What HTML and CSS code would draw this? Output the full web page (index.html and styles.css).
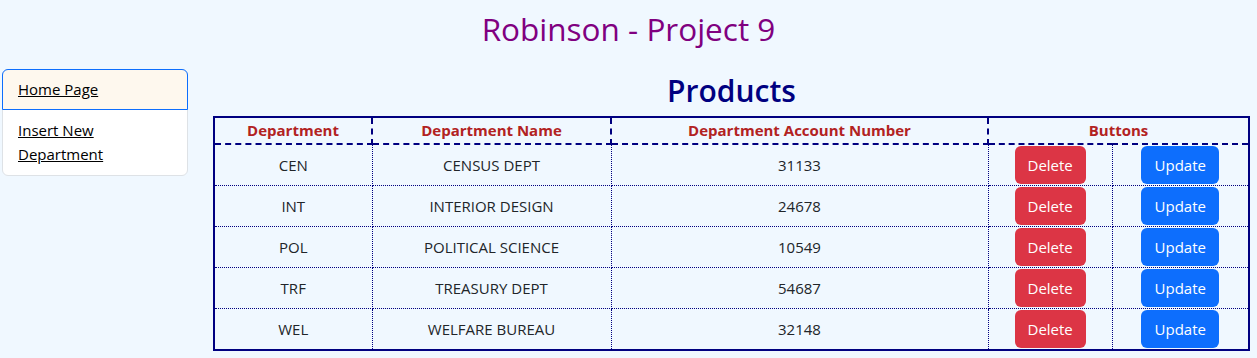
FILE: index.html
```html
<!DOCTYPE html>
<html lang="en">
<head>
    <meta charset="UTF-8">
    <meta name="viewport" content="width=device-width, initial-scale=1.0">
    <title>Robinson - Project 9</title>
    <link rel="stylesheet" href="styles.css">
</head>
<body>
    <h1 class="title">Robinson - Project 9</h1>
    <div class="layout">
        <div class="sidebar">
            <a href="#" class="nav-item active">Home Page</a>
            <a href="#" class="nav-item">Insert New Department</a>
        </div>
        <div class="main">
            <h2 class="heading">Products</h2>
            <table class="products">
                <colgroup>
                    <col class="col-code">
                    <col class="col-name">
                    <col class="col-acct">
                    <col class="col-del">
                    <col class="col-upd">
                </colgroup>
                <thead>
                    <tr>
                        <th>Department</th>
                        <th>Department Name</th>
                        <th>Department Account Number</th>
                        <th colspan="2">Buttons</th>
                    </tr>
                </thead>
                <tbody>
                    <tr>
                        <td>CEN</td>
                        <td>CENSUS DEPT</td>
                        <td>31133</td>
                        <td><button class="btn btn-delete">Delete</button></td>
                        <td><button class="btn btn-update">Update</button></td>
                    </tr>
                    <tr>
                        <td>INT</td>
                        <td>INTERIOR DESIGN</td>
                        <td>24678</td>
                        <td><button class="btn btn-delete">Delete</button></td>
                        <td><button class="btn btn-update">Update</button></td>
                    </tr>
                    <tr>
                        <td>POL</td>
                        <td>POLITICAL SCIENCE</td>
                        <td>10549</td>
                        <td><button class="btn btn-delete">Delete</button></td>
                        <td><button class="btn btn-update">Update</button></td>
                    </tr>
                    <tr>
                        <td>TRF</td>
                        <td>TREASURY DEPT</td>
                        <td>54687</td>
                        <td><button class="btn btn-delete">Delete</button></td>
                        <td><button class="btn btn-update">Update</button></td>
                    </tr>
                    <tr>
                        <td>WEL</td>
                        <td>WELFARE BUREAU</td>
                        <td>32148</td>
                        <td><button class="btn btn-delete">Delete</button></td>
                        <td><button class="btn btn-update">Update</button></td>
                    </tr>
                </tbody>
            </table>
        </div>
    </div>
</body>
</html>
```

FILE: styles.css
```css
body {
    font-family: "Open Sans", "Noto Sans", sans-serif;
    font-size: 15px;
    line-height: 1.5;
    color: #212529;
    background-color: #f0f8ff;
    margin: 0;
}
.title {
    text-align: center;
    color: #800080;
    font-size: 31.5px;
    font-weight: 500;
    line-height: 1.2;
    margin: 10px 0 16px;
}
.layout {
    display: flex;
    align-items: flex-start;
}
.sidebar {
    box-sizing: border-box;
    width: 186px;
    margin-left: 2px;
    margin-top: 5px;
    display: flex;
    flex-direction: column;
    background-color: #fff;
    border: 1px solid #dee2e6;
    border-radius: 6px;
}
.nav-item {
    display: block;
    padding: 7px 15px 8px;
    color: #000;
    font-size: 15px;
    line-height: 24px;
    border: 1px solid transparent;
    margin: -1px;
}
.nav-item + .nav-item {
    margin-top: 0;
    padding-top: 8px;
    padding-bottom: 9px;
}
.nav-item.active {
    background-color: #fef8ee;
    border-color: #0d6efd;
    border-radius: 6px 6px 0 0;
}
.main {
    flex: 1;
    margin-left: 25px;
    margin-right: 7px;
    margin-top: 9px;
}
.heading {
    text-align: center;
    color: #000080;
    font-size: 30px;
    font-weight: 600;
    line-height: 1.2;
    margin: 0 0 7px;
}
.products {
    width: 100%;
    table-layout: fixed;
    border-collapse: collapse;
    border: 2px solid #000080;
    text-align: center;
}
.col-code { width: 158px; }
.col-name { width: 239px; }
.col-acct { width: 377px; }
.col-del { width: 124px; }
.products th {
    color: #b22222;
    font-weight: 700;
    font-size: 15px;
    padding: 1px;
    height: 23px;
    border: 2px dashed #000080;
}
.products td {
    padding: 1px;
    border: 1px dotted #000080;
    height: 38px;
}
.btn {
    font-family: inherit;
    font-size: 15px;
    line-height: 1.5;
    color: #fff;
    border: 1px solid transparent;
    border-radius: 6px;
    padding: 6px 12px;
    height: 38px;
}
.btn-delete {
    background-color: #dc3545;
    width: 71px;
}
.btn-update {
    background-color: #0d6efd;
    width: 78px;
}
```
